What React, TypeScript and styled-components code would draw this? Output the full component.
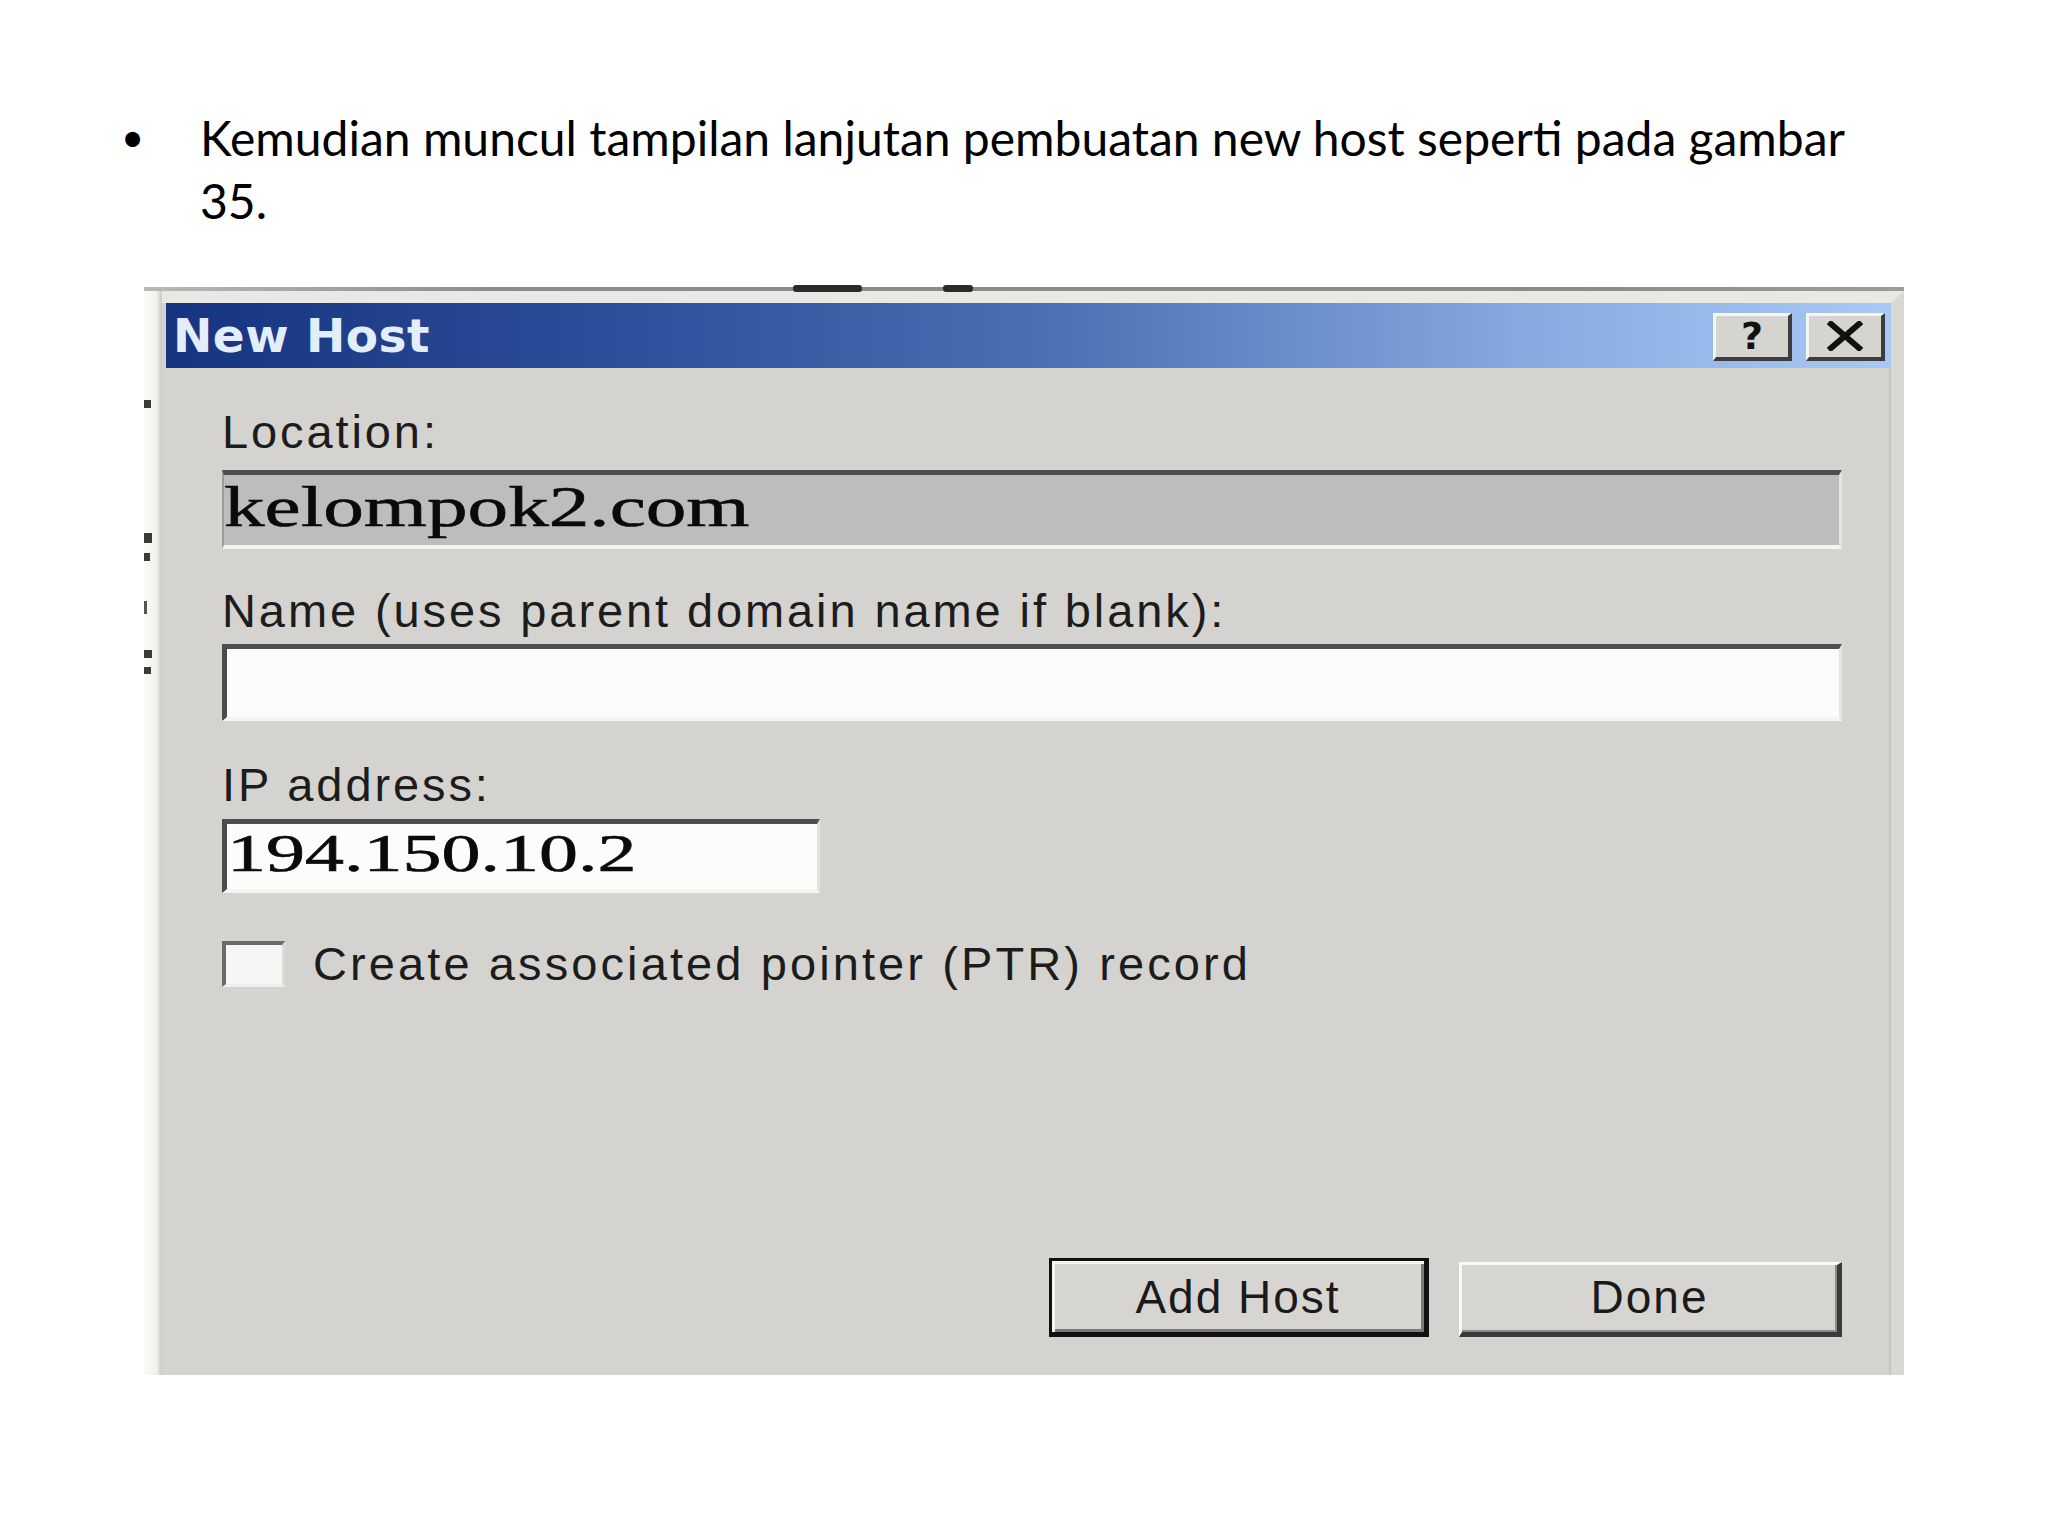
import styled, { createGlobalStyle } from 'styled-components';

const GlobalStyle = createGlobalStyle`
  html, body {
    margin: 0;
    padding: 0;
    background: #ffffff;
  }
`;

const Slide = styled.div`
  width: 2048px;
  height: 1536px;
  display: flex;
  flex-direction: column;
  background: #ffffff;
`;

const BulletRow = styled.div`
  display: flex;
  padding: 106px 0 0 121px;
  font-family: Lato, 'Liberation Sans', sans-serif;
  font-size: 48px;
  line-height: 63px;
  color: #000;
`;

const Bullet = styled.span`
  width: 79px;
  flex: none;
  font-size: 40px;
`;

const BulletText = styled.p`
  margin: 0;
  width: 1680px;
`;

const Frame = styled.div`
  margin: 55px 0 0 144px;
  width: 1760px;
  height: 1088px;
  display: flex;
  flex-direction: column;
  background: #fdfdfb;
`;

const TopEdge = styled.div`
  position: relative;
  height: 4px;
  background: linear-gradient(90deg, #b9b9b9 0%, #8c8c8c 20%, #8a8a8a 80%, #9c9c9c 100%);
`;

const Mark = styled.span<{ $left: number; $width: number }>`
  position: absolute;
  top: -2px;
  left: ${(p) => p.$left}px;
  width: ${(p) => p.$width}px;
  height: 7px;
  border-radius: 3px;
  background: #2a2a2a;
`;

const FrameRow = styled.div`
  flex: 1;
  display: flex;
`;

const LeftStrip = styled.div`
  width: 18px;
  flex: none;
  background: linear-gradient(90deg, #fafaf7 0%, #f2f1ed 70%, #c9c8c4 100%);
`;

const Window = styled.div`
  flex: 1;
  display: flex;
  flex-direction: column;
  background: #d4d3cf;
  border-top: 12px solid #e9e8e4;
  border-right: 13px solid #d9d8d4;
  box-shadow: inset -2px 0 0 #c6c5c1;
`;

const TitleBar = styled.div`
  height: 65px;
  margin-left: 4px;
  display: flex;
  align-items: center;
  justify-content: space-between;
  padding: 0 6px 0 7px;
  background: linear-gradient(90deg, #16347f 0%, #2c4d9a 25%, #4a6db3 50%, #85a8e0 78%, #a8c9f5 100%);
`;

const Title = styled.span`
  font-family: 'DejaVu Sans', Verdana, sans-serif;
  font-weight: bold;
  font-size: 47px;
  color: #e4edfb;
  letter-spacing: 0.5px;
`;

const TitleButtons = styled.div`
  display: flex;
  gap: 14px;
  padding-top: 2px;
`;

const CaptionButton = styled.div`
  width: 79px;
  height: 48px;
  box-sizing: border-box;
  display: flex;
  align-items: center;
  justify-content: center;
  background: #d6d4ce;
  border-top: 3px solid #f6f6f2;
  border-left: 3px solid #f6f6f2;
  border-right: 4px solid #3c3c3c;
  border-bottom: 4px solid #3c3c3c;
  font-family: 'DejaVu Sans', sans-serif;
  font-weight: bold;
  font-size: 38px;
  color: #111;
`;

const Body = styled.div`
  flex: 1;
  display: flex;
  flex-direction: column;
  padding: 36px 49px 38px 60px;
`;

const Label = styled.div<{ $gap: number }>`
  margin-top: ${(p) => p.$gap}px;
  font-family: 'Liberation Sans', Arial, sans-serif;
  font-size: 47px;
  line-height: 56px;
  letter-spacing: 2.9px;
  color: #1c1c1c;
`;

const Field = styled.div<{ $height: number; $width?: number; $gap: number; $readOnly?: boolean }>`
  margin-top: ${(p) => p.$gap}px;
  height: ${(p) => p.$height}px;
  width: ${(p) => (p.$width ? `${p.$width}px` : 'auto')};
  box-sizing: border-box;
  display: flex;
  align-items: center;
  overflow: hidden;
  background: ${(p) => (p.$readOnly ? '#bdbdbc' : '#fcfcfb')};
  border-top: 5px solid #4e4e4e;
  border-left: ${(p) => (p.$readOnly ? '2px solid #9a9a9a' : '5px solid #4a4a4a')};
  border-right: 3px solid #e4e3df;
  border-bottom: 4px solid #f4f4f1;
`;

const SerifValue = styled.span<{ $size: number; $stretch: number }>`
  display: inline-block;
  font-family: 'Liberation Serif', 'Times New Roman', serif;
  font-size: ${(p) => p.$size}px;
  color: #0a0a0a;
  transform: scaleX(${(p) => p.$stretch});
  transform-origin: left center;
  white-space: nowrap;
  margin-top: -6px;
  -webkit-text-stroke: 0.6px #0a0a0a;
`;

const CheckRow = styled.div`
  margin-top: 43px;
  display: flex;
  align-items: center;
  gap: 28px;
`;

const CheckBox = styled.span`
  width: 63px;
  height: 46px;
  box-sizing: border-box;
  background: #f6f6f4;
  border-top: 4px solid #6a6a6a;
  border-left: 4px solid #6a6a6a;
  border-right: 3px solid #dcdbd7;
  border-bottom: 3px solid #eeeeec;
`;

const CheckLabel = styled.span`
  font-family: 'Liberation Sans', Arial, sans-serif;
  font-size: 47px;
  letter-spacing: 3.1px;
  color: #1c1c1c;
`;

const Footer = styled.div`
  margin-top: auto;
  display: flex;
  justify-content: flex-end;
  align-items: flex-end;
  gap: 30px;
`;

const DialogButton = styled.div<{ $default?: boolean }>`
  width: ${(p) => (p.$default ? 380 : 383)}px;
  height: ${(p) => (p.$default ? 79 : 75)}px;
  box-sizing: border-box;
  display: flex;
  align-items: center;
  justify-content: center;
  padding-bottom: ${(p) => (p.$default ? 0 : 4)}px;
  background: #d6d5d1;
  font-family: 'Liberation Sans', Arial, sans-serif;
  font-size: 46px;
  letter-spacing: 2px;
  color: #1a1a1a;
  border-top: 3px solid ${(p) => (p.$default ? '#111' : '#fafaf8')};
  border-left: 3px solid ${(p) => (p.$default ? '#111' : '#fafaf8')};
  border-right: 5px solid ${(p) => (p.$default ? '#111' : '#3a3a3a')};
  border-bottom: 5px solid ${(p) => (p.$default ? '#111' : '#3a3a3a')};
  box-shadow: ${(p) =>
    p.$default ? 'inset 3px 3px 0 #f4f4f2, inset -3px -3px 0 #7a7a78' : 'inset -2px -2px 0 #8a8a88'};
`;

const CloseIcon = () => (
  <svg width="40" height="30" viewBox="0 0 40 30">
    <path d="M6 3 L34 27 M34 3 L6 27" stroke="#111" strokeWidth="6" strokeLinecap="square" />
  </svg>
);

const StripMarks = () => (
  <svg width="18" height="400" viewBox="0 0 18 400">
    <rect x="0" y="109" width="7" height="8" fill="#3a3a3a" />
    <rect x="0" y="242" width="8" height="10" fill="#3a3a3a" />
    <rect x="0" y="262" width="6" height="8" fill="#3a3a3a" />
    <rect x="0" y="310" width="3" height="13" fill="#555" />
    <rect x="0" y="359" width="8" height="8" fill="#3a3a3a" />
    <rect x="0" y="376" width="7" height="7" fill="#3a3a3a" />
  </svg>
);

export default function App() {
  return (
    <>
      <GlobalStyle />
      <Slide>
        <BulletRow>
          <Bullet>•</Bullet>
          <BulletText>Kemudian muncul tampilan lanjutan pembuatan new host seperti pada gambar 35.</BulletText>
        </BulletRow>

        <Frame>
          <TopEdge>
            <Mark $left={649} $width={69} />
            <Mark $left={799} $width={30} />
          </TopEdge>
          <FrameRow>
            <LeftStrip>
              <StripMarks />
            </LeftStrip>
            <Window>
              <TitleBar>
                <Title>New Host</Title>
                <TitleButtons>
                  <CaptionButton>?</CaptionButton>
                  <CaptionButton>
                    <CloseIcon />
                  </CaptionButton>
                </TitleButtons>
              </TitleBar>
              <Body>
                <Label $gap={0}>Location:</Label>
                <Field $gap={10} $height={79} $readOnly>
                  <SerifValue $size={56} $stretch={1.45}>kelompok2.com</SerifValue>
                </Field>

                <Label $gap={34}>Name (uses parent domain name if blank):</Label>
                <Field $gap={5} $height={77} />

                <Label $gap={36}>IP address:</Label>
                <Field $gap={6} $height={74} $width={598}>
                  <SerifValue $size={52} $stretch={1.5}>194.150.10.2</SerifValue>
                </Field>

                <CheckRow>
                  <CheckBox />
                  <CheckLabel>Create associated pointer (PTR) record</CheckLabel>
                </CheckRow>

                <Footer>
                  <DialogButton $default>Add Host</DialogButton>
                  <DialogButton>Done</DialogButton>
                </Footer>
              </Body>
            </Window>
          </FrameRow>
        </Frame>
      </Slide>
    </>
  );
}
